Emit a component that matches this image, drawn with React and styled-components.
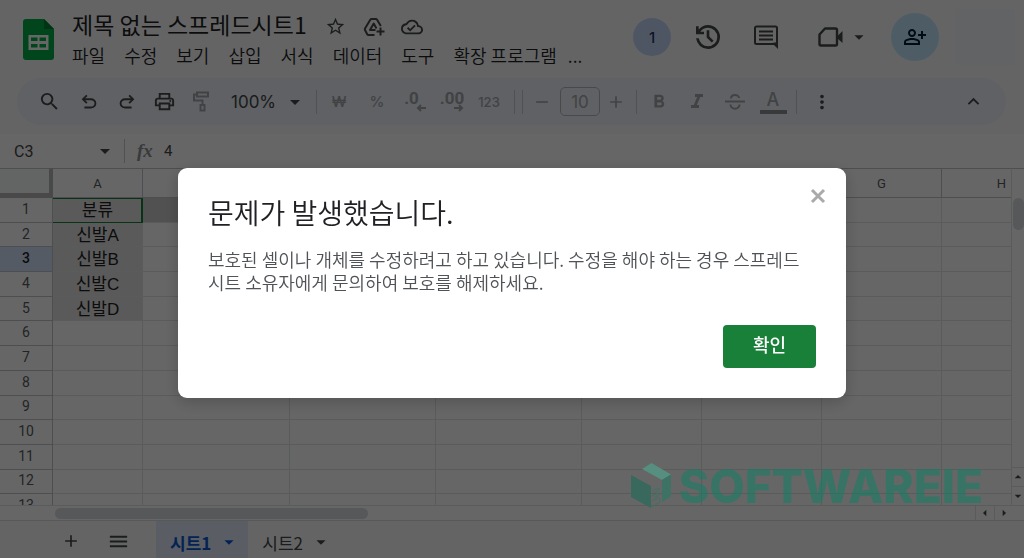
import React from "react";
import styled, { createGlobalStyle, css } from "styled-components";
import {
  MdSearch, MdOutlinePrint, MdStarBorder, MdOutlineCloudDone, MdOutlinePersonAddAlt,
  MdFormatItalic, MdFormatBold, MdMoreVert, MdKeyboardArrowUp,
  MdArrowDropDown, MdArrowDropUp, MdArrowLeft, MdArrowRight, MdAdd, MdRemove, MdMenu,
} from "react-icons/md";

const Global = createGlobalStyle`
  * { box-sizing: border-box; }
  body { margin: 0; background: #f9fbfd; color: #1f1f1f; font-family: "Noto Sans CJK KR", "Noto Sans", sans-serif; overflow: hidden; }
  button, input, select { font: inherit; color: inherit; border: 0; background: none; padding: 0; margin: 0; }
  svg { display: block; flex: none; }
`;

const Page = styled.div`
  display: flex;
  flex-direction: column;
  height: 100vh;
`;

/* ---------- title bar ---------- */
const Header = styled.header`
  display: flex;
  height: 78px;
  padding: 0 9px 0 23px;
  flex: none;
`;
const Logo = styled.svg`
  width: 31px;
  height: 41px;
  margin-top: 19px;
`;
const Titles = styled.div`
  flex: 1;
  min-width: 0;
  margin-left: 18px;
  padding-top: 8px;
`;
const TitleRow = styled.div`
  display: flex;
  align-items: center;
  gap: 16px;
  height: 32px;
  color: #444746;
`;
const DocTitle = styled.h1`
  margin: 0 2px 0 0;
  font-size: 23px;
  line-height: 32px;
  font-weight: 400;
  color: #1f1f1f;
  white-space: nowrap;
`;
const IconButton = styled.button`
  display: flex;
  align-items: center;
  justify-content: center;
  flex: none;
  width: ${(p) => p.$w || 22}px;
  height: 22px;
  margin-left: ${(p) => p.$ml || 0}px;
`;
const TitleIcon = styled(IconButton)`
  margin-top: 5px;
`;
const Menu = styled.nav`
  display: flex;
  gap: 19px;
  height: 28px;
  white-space: nowrap;
`;
const MenuItem = styled.button`
  font-size: 18px;
  line-height: 30px;
  font-weight: 350;
  &:last-child { margin-left: -8px; }
`;
const Actions = styled.div`
  display: flex;
  align-items: center;
  height: 74px;
  color: #444746;
`;
const Round = styled.button`
  display: flex;
  align-items: center;
  justify-content: center;
  width: ${(p) => p.$size}px;
  height: ${(p) => p.$size}px;
  margin-left: ${(p) => p.$ml || 0}px;
  border-radius: 50%;
  background: ${(p) => p.$bg};
  color: ${(p) => p.$color};
  font: 500 15px Inter, sans-serif;
`;
const Account = styled.div`
  width: 60px;
  height: 56px;
  margin-left: 16px;
  background: #f4f8fd;
`;

/* ---------- toolbar ---------- */
const Toolbar = styled.div`
  display: flex;
  align-items: center;
  flex: none;
  height: 47px;
  margin: 0 18px 9px 17px;
  padding: 0 14px 0 12px;
  border-radius: 24px;
  background: #edf2fa;
  color: #444746;
  font-family: Inter, sans-serif;
`;
const Tool = styled.button`
  display: flex;
  align-items: center;
  justify-content: center;
  flex: none;
  width: ${(p) => p.$w || 38}px;
  height: 36px;
  font-size: ${(p) => p.$size || 16}px;
  font-weight: 500;
  ${(p) => p.$off && css`color: #a3a6aa;`}
`;
const ZoomBox = styled.label`
  display: flex;
  align-items: center;
  width: 90px;
  padding-left: 12px;
`;
const ZoomSelect = styled.select`
  appearance: none;
  width: 52px;
  font-size: 17px;
  outline: 0;
`;
const Divider = styled.span`
  width: 1px;
  height: 24px;
  flex: none;
  margin: 0 ${(p) => p.$r ?? 3}px 0 ${(p) => p.$l ?? 4}px;
  background: #c7cbd1;
`;
const SizeInput = styled.input`
  width: 40px;
  height: 29px;
  margin: 0 2px;
  border: 1px solid #b4b7bc;
  border-radius: 5px;
  text-align: center;
  font-size: 17px;
  color: #a3a6aa;
`;
const Decimal = styled.span`
  display: flex;
  flex-direction: column;
  align-items: flex-end;
  font: 700 17px/12px Roboto, sans-serif;
`;
const Digits = styled.span`
  padding-right: ${(p) => p.$pad || 0}px;
`;
const TextColor = styled.span`
  display: flex;
  flex-direction: column;
  align-items: center;
  width: 27px;
  border-bottom: 4px solid #8d8f92;
  font-size: 18px;
  line-height: 21px;
`;
const Spacer = styled.span`flex: 1;`;

/* ---------- formula bar ---------- */
const FormulaBar = styled.div`
  display: flex;
  align-items: center;
  flex: none;
  height: 34px;
  padding-left: 14px;
  background: #fff;
  color: #444746;
  font-family: Roboto, sans-serif;
`;
const NameBox = styled.input`
  width: 80px;
  font-size: 16px;
`;
const Fx = styled.span`
  width: 28px;
  padding-left: 9px;
  font: italic 700 19px "Liberation Serif", serif;
  color: #8e9194;
`;
const FormulaInput = styled.input`
  flex: 1;
  min-width: 0;
  padding-left: 8px;
  font-size: 15px;
`;

/* ---------- grid ---------- */
const Main = styled.main`
  display: flex;
  flex: 1;
  min-height: 0;
  background: #fff;
`;
const SheetView = styled.div`
  flex: 1;
  min-width: 0;
  overflow: hidden;
`;
const Sheet = styled.table`
  table-layout: fixed;
  border-collapse: separate;
  border-spacing: 0;
  width: 1062px;
  height: 351px;
  font-family: "Liberation Sans", "Noto Sans CJK KR", sans-serif;
`;
const Col = styled.col`width: ${(p) => p.$w}px;`;
const headCell = css`
  padding: 0;
  font-family: Roboto, sans-serif;
  font-size: 13px;
  font-weight: 400;
  color: #575b5f;
  border-right: 1px solid #c0c3c5;
  border-bottom: 1px solid #c0c3c5;
`;
const ColHead = styled.th`
  ${headCell}
  height: 30px;
  border-top: 1px solid #c0c3c5;
`;
const Corner = styled.td`
  padding: 0;
  background: #f8f9fa;
  border-top: 1px solid #c0c3c5;
  border-right: 4px solid #b7b7b7;
  border-bottom: 5px solid #b7b7b7;
`;
const RowHead = styled.th`
  ${headCell}
  height: 24px;
  font-size: 14px;
  line-height: 16px;
  padding-bottom: 2px;
  ${(p) => p.$active && css`background: #d3e3fd; color: #1f1f1f; font-weight: 500;`}
`;
const Cell = styled.td`
  padding: 1px 0 0;
  height: 24px;
  font-size: 17px;
  line-height: 17px;
  text-align: center;
  white-space: nowrap;
  border-right: 1px solid #e1e3e3;
  border-bottom: 1px solid #e1e3e3;
  background: ${(p) => p.$bg || "#fff"};
  ${(p) => p.$selected && css`
    border-color: #188038;
    box-shadow: inset -1px 0 #188038, inset 0 1px #188038;
  `}
`;

/* ---------- scrollbars ---------- */
const VScroll = styled.div`
  display: flex;
  flex-direction: column;
  align-items: center;
  width: 13px;
  flex: none;
  padding: 29px 0 0;
  border-top: 1px solid #c0c3c5;
  border-left: 1px solid #e1e3e3;
  background: #fff;
  color: #444746;
`;
const VThumb = styled.span`
  width: 11px;
  height: 32px;
  border-radius: 6px;
  background: #dadce0;
`;
const HScroll = styled.div`
  display: flex;
  align-items: center;
  flex: none;
  height: 15px;
  padding: 0 11px 0 53px;
  border-top: 1px solid #e1e3e3;
  background: #fff;
  color: #444746;
`;
const HThumb = styled.span`
  width: 313px;
  height: 11px;
  margin-left: 2px;
  border-radius: 6px;
  background: #dadce0;
`;
const Stepper = styled.button`
  display: flex;
  align-items: center;
  justify-content: center;
  width: ${(p) => (p.$vertical ? 12 : 19)}px;
  height: ${(p) => (p.$vertical ? 19 : 14)}px;
  flex: none;
  border: 0 solid #e1e3e3;
  ${(p) => (p.$vertical ? "border-top-width: 1px;" : "border-left-width: 1px;")}
`;

/* ---------- sheet tabs ---------- */
const Footer = styled.footer`
  display: flex;
  align-items: center;
  flex: none;
  height: 38px;
  padding: 3px 0 0 47px;
  border-top: 1px solid #dadce0;
  color: #444746;
`;
const Tab = styled.button`
  display: flex;
  align-items: center;
  align-self: flex-end;
  gap: 7px;
  height: 37px;
  padding: 5px 8px 0 14px;
  font-size: 17px;
  ${(p) => p.$active && css`
    margin-left: 14px;
    background: #e1e9f7;
    color: #0b57d0;
    font-weight: 700;
  `}
`;

/* ---------- watermark ---------- */
const Watermark = styled.div`
  position: fixed;
  right: 41px;
  bottom: 46px;
  display: flex;
  align-items: center;
  gap: 7px;
  font: 800 46px/52px Inter, sans-serif;
  color: rgba(25, 125, 100, 0.6);
`;

/* ---------- dialog ---------- */
const Overlay = styled.div`
  position: fixed;
  inset: 0;
  display: flex;
  align-items: center;
  justify-content: center;
  padding-top: 7px;
  background: rgba(0, 0, 0, 0.6);
`;
const Dialog = styled.section`
  position: relative;
  width: 668px;
  max-width: 100%;
  padding: 24px 30px 30px;
  border-radius: 9px;
  background: #fff;
  box-shadow: 0 4px 16px rgba(0, 0, 0, 0.2);
`;
const DialogTitle = styled.h2`
  margin: 0;
  font-size: 28px;
  line-height: 40px;
  font-weight: 350;
  color: #202124;
`;
const DialogText = styled.p`
  margin: 16px 0 31px;
  padding-right: 8px;
  font-size: 18px;
  line-height: 23px;
  font-weight: 350;
  color: #4f5357;
`;
const DialogActions = styled.div`
  display: flex;
  justify-content: flex-end;
`;
const Confirm = styled.button`
  width: 93px;
  height: 43px;
  padding-bottom: 4px;
  border-radius: 4px;
  background: #188038;
  color: #fff;
  font-size: 18px;
  font-weight: 500;
`;
const Close = styled.button`
  position: absolute;
  top: 20px;
  right: 20px;
  width: 16px;
  height: 16px;
  color: #aaa;
`;

const Sym = ({ d, size = 20 }) => (
  <svg width={size} height={size} viewBox="0 -960 960 960" fill="currentColor"><path d={d} /></svg>
);
const UNDO = "M280-200v-80h284q63 0 109.500-40T720-420q0-60-46.500-100T564-560H312l104 104-56 56-200-200 200-200 56 56-104 104h252q97 0 166.500 63T800-420q0 94-69.500 157T564-200H280Z";
const REDO = "M396-200q-97 0-166.500-63T160-420q0-94 69.500-157T396-640h252L544-744l56-56 200 200-200 200-56-56 104-104H396q-63 0-109.500 40T240-420q0 60 46.500 100T396-280h284v80H396Z";
const HISTORY = "M480-120q-138 0-240.500-91.500T122-440h82q14 104 92.500 172T480-200q117 0 198.500-81.500T760-480q0-117-81.500-198.500T480-760q-69 0-129 32t-101 88h110v80H120v-240h80v94q51-64 124.500-99T480-840q75 0 140.500 28.500t114 77q48.500 48.500 77 114T840-480q0 75-28.500 140.500t-77 114q-48.500 48.500-114 77T480-120Zm112-192L440-464v-216h80v184l128 128-56 56Z";

const MENUS = ["파일", "수정", "보기", "삽입", "서식", "데이터", "도구", "확장 프로그램", "..."];
const COLS = ["A", "B", "C", "D", "E", "F", "G", "H"];
const WIDTHS = [53, 90, 147, 146, 146, 120, 120, 120, 120];
const VALUES = ["분류", "신발A", "신발B", "신발C", "신발D"];

function cellFill(row, col) {
  if (col === 0 && row < 5) return "#e1e1e1";
  if (row === 0 && col < 4) return "#cbcbcb";
  return undefined;
}

export default function App() {
  return (
    <>
      <Global />
      <Page>
        <Header>
          <Logo viewBox="0 0 31 41">
            <path d="M3 0h18l10 10v28a3 3 0 0 1-3 3H3a3 3 0 0 1-3-3V3a3 3 0 0 1 3-3z" fill="#00ac47" />
            <path d="M21 0l10 10H21z" fill="#00832d" />
            <path d="M5.500 16h20v15h-20zM8 18.500v3.500h6.500v-3.500zm8.500 0v3.500H23v-3.500zM8 25v3.500h6.500V25zm8.500 0v3.500H23V25z" fill="#fff" fillRule="evenodd" />
          </Logo>
          <Titles>
            <TitleRow>
              <DocTitle>제목 없는 스프레드시트1</DocTitle>
              <TitleIcon aria-label="별표"><MdStarBorder size={21} /></TitleIcon>
              <TitleIcon aria-label="이동">
                <svg width="22" height="20" viewBox="0 0 22 20" fill="none" stroke="currentColor" strokeWidth="2" strokeLinejoin="round">
                  <path d="M11.500 18H5.500a1.500 1.500 0 0 1-1.300-.8L2 13a1.500 1.500 0 0 1 0-1.400L7.300 2.700A1.500 1.500 0 0 1 8.600 2h4.200a1.500 1.500 0 0 1 1.300.7L17.800 9" />
                  <path d="M12.500 13H7L10.700 6.500 13.500 11.500M17.500 10.500v8M13.500 14.500h8" />
                </svg>
              </TitleIcon>
              <TitleIcon aria-label="저장됨"><MdOutlineCloudDone size={22} /></TitleIcon>
            </TitleRow>
            <Menu>{MENUS.map((m) => <MenuItem key={m}>{m}</MenuItem>)}</Menu>
          </Titles>
          <Actions>
            <Round $size={38} $bg="#c6d6f8" $color="#1f3760">1</Round>
            <IconButton $w={74} aria-label="기록"><Sym d={HISTORY} size={32} /></IconButton>
            <IconButton $w={42} aria-label="댓글">
              <svg width="24" height="24" viewBox="0 0 24 24" fill="none" stroke="currentColor" strokeWidth="2">
                <path d="M23 20V3a1.500 1.500 0 0 0-1.500-1.500h-19A1.500 1.500 0 0 0 1 3v14.500A1.500 1.500 0 0 0 2.500 19H20" />
                <path d="M24 24V17l-6 1z" fill="currentColor" stroke="none" />
                <path d="M5 6.500h14M5 10.500h14M5 14.500h14" />
              </svg>
            </IconButton>
            <IconButton $w={36} $ml={25} aria-label="회의">
              <svg width="25" height="20" viewBox="0 0 25 20" fill="none" stroke="currentColor" strokeWidth="2.400">
                <path d="M7 1.500h10.500a1.500 1.500 0 0 1 1.500 1.500v14a1.500 1.500 0 0 1-1.500 1.500H3A1.500 1.500 0 0 1 1.500 17V7.500z" strokeLinejoin="round" />
                <path d="M19 9.500l5.500-5.500v12L19 11z" fill="currentColor" stroke="none" />
              </svg>
            </IconButton>
            <IconButton aria-label="회의 메뉴"><MdArrowDropDown size={22} /></IconButton>
            <Round $ml={21} $size={48} $bg="#c2e7ff" $color="#001d35" aria-label="공유"><MdOutlinePersonAddAlt size={24} /></Round>
            <Account />
          </Actions>
        </Header>

        <Toolbar>
          <Tool $w={40} aria-label="검색"><MdSearch size={23} /></Tool>
          <Tool $w={40} aria-label="실행취소"><Sym d={UNDO} size={22} /></Tool>
          <Tool $w={36} aria-label="재실행"><Sym d={REDO} size={22} /></Tool>
          <Tool aria-label="인쇄"><MdOutlinePrint size={23} /></Tool>
          <Tool $w={36} $off aria-label="서식 복사">
            <svg width="18" height="21" viewBox="0 0 18 21" fill="none" stroke="currentColor" strokeWidth="2">
              <path d="M5 1.500h11v4H5zM5 3.500H2v6h8.500V14M8.500 14h4v5.500h-4z" />
            </svg>
          </Tool>
          <ZoomBox>
            <ZoomSelect aria-label="확대/축소" defaultValue="100%"><option>100%</option></ZoomSelect>
            <MdArrowDropDown size={24} />
          </ZoomBox>
          <Divider $l={7} />
          <Tool $off $size={15}>₩</Tool>
          <Tool $off $size={15}>%</Tool>
          <Tool $off aria-label="소수점 이하 자릿수 감소">
            <Decimal>
              <Digits $pad={7}>.0</Digits>
              <svg width="10" height="8" viewBox="0 0 10 8" fill="none" stroke="currentColor" strokeWidth="2"><path d="M10 4H2M5 1L2 4l3 3" /></svg>
            </Decimal>
          </Tool>
          <Tool $off $w={36} aria-label="소수점 이하 자릿수 증가">
            <Decimal>
              <Digits>.00</Digits>
              <svg width="10" height="8" viewBox="0 0 10 8" fill="none" stroke="currentColor" strokeWidth="2"><path d="M0 4h8M5 1l3 3-3 3" /></svg>
            </Decimal>
          </Tool>
          <Tool $off $size={13}>123</Tool>
          <Divider $l={6} $r={7} />
          <Divider $l={0} />
          <Tool $w={32} $off aria-label="글꼴 크기 줄이기"><MdRemove size={20} /></Tool>
          <SizeInput aria-label="글꼴 크기" defaultValue="10" />
          <Tool $w={28} $off aria-label="글꼴 크기 늘리기"><MdAdd size={20} /></Tool>
          <Divider $l={6} />
          <Tool $off aria-label="굵게"><MdFormatBold size={22} /></Tool>
          <Tool $off aria-label="기울임꼴"><MdFormatItalic size={24} /></Tool>
          <Tool $off aria-label="취소선">
            <svg width="20" height="18" viewBox="0 0 20 18" fill="none" stroke="currentColor" strokeWidth="2">
              <path d="M0 8.500h20M6 5.500C6 1 14 1 14 5M5.500 11.500c0 5.500 9 5.500 9 0" />
            </svg>
          </Tool>
          <Tool $off><TextColor>A</TextColor></Tool>
          <Divider />
          <Tool $w={44} aria-label="더보기"><MdMoreVert size={22} /></Tool>
          <Spacer />
          <Tool aria-label="메뉴 숨기기"><MdKeyboardArrowUp size={23} /></Tool>
        </Toolbar>

        <FormulaBar>
          <NameBox aria-label="이름 상자" defaultValue="C3" />
          <IconButton aria-label="이름 목록"><MdArrowDropDown size={24} /></IconButton>
          <Divider $l={8} />
          <Fx>fx</Fx>
          <FormulaInput aria-label="수식" defaultValue="4" />
        </FormulaBar>

        <Main>
          <SheetView>
            <Sheet>
              <colgroup>{WIDTHS.map((w, i) => <Col key={i} $w={w} />)}</colgroup>
              <thead>
                <tr><Corner />{COLS.map((c) => <ColHead key={c} scope="col">{c}</ColHead>)}</tr>
              </thead>
              <tbody>
                {Array.from({ length: 13 }, (_, r) => (
                  <tr key={r}>
                    <RowHead scope="row" $active={r === 2}>{r + 1}</RowHead>
                    {COLS.map((c, i) => (
                      <Cell key={c} $bg={cellFill(r, i)} $selected={r === 0 && i === 0}>
                        {i === 0 ? VALUES[r] : null}
                      </Cell>
                    ))}
                  </tr>
                ))}
              </tbody>
            </Sheet>
          </SheetView>
          <VScroll>
            <VThumb />
            <Spacer />
            <Stepper $vertical aria-label="위로"><MdArrowDropUp size={16} /></Stepper>
            <Stepper $vertical aria-label="아래로"><MdArrowDropDown size={16} /></Stepper>
          </VScroll>
        </Main>
        <HScroll>
          <HThumb />
          <Spacer />
          <Stepper aria-label="왼쪽으로"><MdArrowLeft size={16} /></Stepper>
          <Stepper aria-label="오른쪽으로"><MdArrowRight size={16} /></Stepper>
        </HScroll>
        <Footer>
          <IconButton $w={48} aria-label="시트 추가"><MdAdd size={20} /></IconButton>
          <IconButton $w={47} aria-label="모든 시트"><MdMenu size={23} /></IconButton>
          <Tab $active>시트1<MdArrowDropDown size={22} /></Tab>
          <Tab>시트2<MdArrowDropDown size={22} /></Tab>
        </Footer>
      </Page>

      <Overlay>
        <Dialog role="dialog" aria-labelledby="dialog-title">
          <DialogTitle id="dialog-title">문제가 발생했습니다.</DialogTitle>
          <DialogText>
            보호된 셀이나 개체를 수정하려고 하고 있습니다. 수정을 해야 하는 경우 스프레드시트 소유자에게 문의하여 보호를 해제하세요.
          </DialogText>
          <DialogActions><Confirm>확인</Confirm></DialogActions>
          <Close aria-label="닫기">
            <svg width="16" height="16" viewBox="0 0 16 16" stroke="currentColor" strokeWidth="3"><path d="M2 2l12 12M14 2L2 14" /></svg>
          </Close>
        </Dialog>
      </Overlay>

      <Watermark>
        <svg width="41" height="46" viewBox="0 0 41 46">
          <path d="M0 12l20 11v22L0 34z" fill="#38695c" />
          <path d="M11 6l9.500-6L40 11.500 31 17z" fill="#568f80" />
          <path d="M31 17l9-5.500v22L31 39z" fill="#3d7265" />
          <path d="M21 28l5-3 3 1-6 4M21 33l6-3 2 1-6 4M21 38l6-3 2 1v3l-8 5" fill="none" stroke="#3d7265" strokeWidth="1" />
        </svg>
        SOFTWAREIE
      </Watermark>
    </>
  );
}
